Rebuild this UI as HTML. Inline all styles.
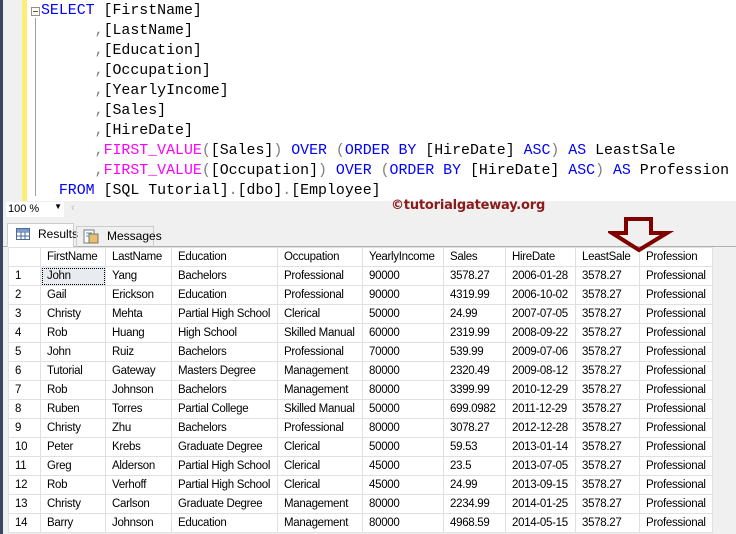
<!DOCTYPE html>
<html><head><style>
*{margin:0;padding:0;box-sizing:border-box}
body{width:736px;height:534px;overflow:hidden;background:#fff;position:relative;font-family:"Liberation Sans",sans-serif}
.strip{position:absolute;left:0;top:0;width:3px;height:534px;background:#3b4660}
.gut{position:absolute;left:3px;top:0;width:19px;height:201px;background:#f0f0f0}
.yb{position:absolute;left:22px;top:0;width:5px;height:201px;background:#fbee74}
.vl{position:absolute;left:35px;top:18px;width:1px;height:178px;background:#a0a0a0}
.box{position:absolute;left:31px;top:7px;width:9px;height:9px;border:1px solid #909090;background:#fff}
.box:after{content:"";position:absolute;left:1px;top:3px;width:5px;height:1px;background:#555}
pre{position:absolute;left:41px;top:1px;font-family:"Liberation Mono",monospace;font-size:14.9px;line-height:20px;color:#000}
.k{color:#0000ff}.f{color:#ff00ff}.g{color:#808080}
.zoom{position:absolute;left:3px;top:201px;width:733px;height:17px;background:#f0f0f0;font-size:11px}
.tabs{position:absolute;left:3px;top:218px;width:733px;height:29px;background:#f0f0f0;border-bottom:1px solid #b0b0b0}
.tab{position:absolute;top:6px;height:20px;font-size:12px;padding:3px 0 0 30px}
.grid{position:absolute;left:3px;top:247px;width:733px;height:287px;background:#f0f0f0}
table{position:absolute;left:5px;top:0;border-collapse:collapse;font-size:11.5px;background:#fff}
td{height:19px;border:1px solid #e0e0e0;padding:0 0 0 6px;white-space:nowrap;letter-spacing:-0.3px;color:#000}
.wm{position:absolute;left:391px;top:198px;color:#8b1a1a;font-weight:bold;font-size:13px;font-family:"DejaVu Sans",sans-serif;letter-spacing:-0.2px}
.arrow{position:absolute;left:608px;top:216px;z-index:5}
</style></head><body>
<div class="strip"></div><div class="gut"></div><div class="yb"></div><div class="vl"></div><div class="box"></div>
<pre><span class="k">SELECT</span> [FirstName]
      <span class="g">,</span>[LastName]
      <span class="g">,</span>[Education]
      <span class="g">,</span>[Occupation]
      <span class="g">,</span>[YearlyIncome]
      <span class="g">,</span>[Sales]
      <span class="g">,</span>[HireDate]
      <span class="g">,</span><span class="f">FIRST_VALUE</span><span class="g">(</span>[Sales]<span class="g">)</span> <span class="k">OVER</span> <span class="g">(</span><span class="k">ORDER BY</span> [HireDate] <span class="k">ASC</span><span class="g">)</span> <span class="k">AS</span> LeastSale
      <span class="g">,</span><span class="f">FIRST_VALUE</span><span class="g">(</span>[Occupation]<span class="g">)</span> <span class="k">OVER</span> <span class="g">(</span><span class="k">ORDER BY</span> [HireDate] <span class="k">ASC</span><span class="g">)</span> <span class="k">AS</span> Profession
  <span class="k">FROM</span> [SQL Tutorial]<span class="g">.</span>[dbo]<span class="g">.</span>[Employee]</pre>
<div class="zoom"><div style="position:absolute;left:3px;top:1px;width:58px;height:15px;background:#fff;padding:1px 0 0 2px">100 %<span style="position:absolute;right:2px;top:0;font-size:8px">▼</span></div><span style="position:absolute;left:68px;top:1px;color:#bbb">‹</span></div>
<div class="wm">©tutorialgateway.org</div>
<div class="tabs">
<div class="tab" style="left:4px;width:67px;background:#fff;border:1px solid #ccc;border-bottom:none;top:5px;height:24px">
<svg style="position:absolute;left:8px;top:4px" width="14" height="12"><rect x=".5" y=".5" width="13" height="11" fill="#fff" stroke="#4a6a9a"/><path d="M.5 4h13M.5 8h13M5 .5v11M9 .5v11" stroke="#4a6a9a"/><rect x="1" y="1" width="12" height="3" fill="#7a9ac8"/></svg>Results</div>
<div class="tab" style="left:73px;width:78px;border:1px solid #ccc;border-bottom:none;top:8px;height:21px;padding-top:2px">
<svg style="position:absolute;left:6px;top:2px" width="16" height="15"><rect x="1" y="1" width="10" height="13" fill="#fff" stroke="#777"/><rect x="6" y="5" width="9" height="9" fill="#e8c070" stroke="#776"/><path d="M3 4h6M3 7h3" stroke="#49c"/></svg>Messages</div>
</div>
<svg class="arrow" width="66" height="38"><path d="M18 3H43V17H59L31 34L4 17H18Z" fill="none" stroke="#800000" stroke-width="4" stroke-linejoin="miter"/></svg>
<div class="grid">
<table>
<colgroup><col style="width:32px"><col style="width:65px"><col style="width:66px"><col style="width:106px"><col style="width:85px"><col style="width:81px"><col style="width:62px"><col style="width:70px"><col style="width:64px"><col style="width:73px"></colgroup>
<tr><td></td><td>FirstName</td><td>LastName</td><td>Education</td><td>Occupation</td><td>YearlyIncome</td><td>Sales</td><td>HireDate</td><td>LeastSale</td><td>Profession</td></tr>
<tr><td>1</td><td style="outline:1px dotted #000;outline-offset:-2px;background:#e8ecf0">John</td><td>Yang</td><td>Bachelors</td><td>Professional</td><td>90000</td><td>3578.27</td><td>2006-01-28</td><td>3578.27</td><td>Professional</td></tr>
<tr><td>2</td><td>Gail</td><td>Erickson</td><td>Education</td><td>Professional</td><td>90000</td><td>4319.99</td><td>2006-10-02</td><td>3578.27</td><td>Professional</td></tr>
<tr><td>3</td><td>Christy</td><td>Mehta</td><td>Partial High School</td><td>Clerical</td><td>50000</td><td>24.99</td><td>2007-07-05</td><td>3578.27</td><td>Professional</td></tr>
<tr><td>4</td><td>Rob</td><td>Huang</td><td>High School</td><td>Skilled Manual</td><td>60000</td><td>2319.99</td><td>2008-09-22</td><td>3578.27</td><td>Professional</td></tr>
<tr><td>5</td><td>John</td><td>Ruiz</td><td>Bachelors</td><td>Professional</td><td>70000</td><td>539.99</td><td>2009-07-06</td><td>3578.27</td><td>Professional</td></tr>
<tr><td>6</td><td>Tutorial</td><td>Gateway</td><td>Masters Degree</td><td>Management</td><td>80000</td><td>2320.49</td><td>2009-08-12</td><td>3578.27</td><td>Professional</td></tr>
<tr><td>7</td><td>Rob</td><td>Johnson</td><td>Bachelors</td><td>Management</td><td>80000</td><td>3399.99</td><td>2010-12-29</td><td>3578.27</td><td>Professional</td></tr>
<tr><td>8</td><td>Ruben</td><td>Torres</td><td>Partial College</td><td>Skilled Manual</td><td>50000</td><td>699.0982</td><td>2011-12-29</td><td>3578.27</td><td>Professional</td></tr>
<tr><td>9</td><td>Christy</td><td>Zhu</td><td>Bachelors</td><td>Professional</td><td>80000</td><td>3078.27</td><td>2012-12-28</td><td>3578.27</td><td>Professional</td></tr>
<tr><td>10</td><td>Peter</td><td>Krebs</td><td>Graduate Degree</td><td>Clerical</td><td>50000</td><td>59.53</td><td>2013-01-14</td><td>3578.27</td><td>Professional</td></tr>
<tr><td>11</td><td>Greg</td><td>Alderson</td><td>Partial High School</td><td>Clerical</td><td>45000</td><td>23.5</td><td>2013-07-05</td><td>3578.27</td><td>Professional</td></tr>
<tr><td>12</td><td>Rob</td><td>Verhoff</td><td>Partial High School</td><td>Clerical</td><td>45000</td><td>24.99</td><td>2013-09-15</td><td>3578.27</td><td>Professional</td></tr>
<tr><td>13</td><td>Christy</td><td>Carlson</td><td>Graduate Degree</td><td>Management</td><td>80000</td><td>2234.99</td><td>2014-01-25</td><td>3578.27</td><td>Professional</td></tr>
<tr><td>14</td><td>Barry</td><td>Johnson</td><td>Education</td><td>Management</td><td>80000</td><td>4968.59</td><td>2014-05-15</td><td>3578.27</td><td>Professional</td></tr>
</table>
</div>
</body></html>
